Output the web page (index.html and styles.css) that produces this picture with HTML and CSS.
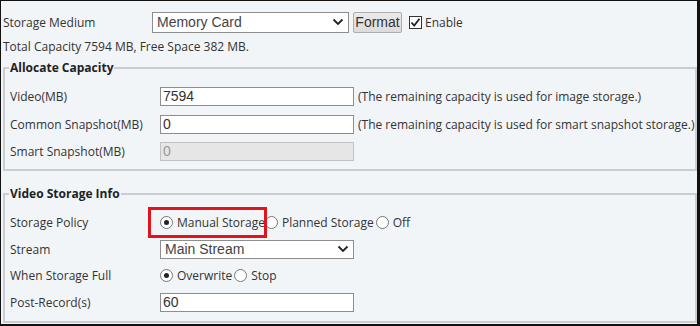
FILE: index.html
```html
<!DOCTYPE html>
<html>
<head>
<meta charset="utf-8">
<link rel="stylesheet" href="styles.css">
</head>
<body>
<div class="frame">
  <div class="toprow">
    <span class="toplabel">Storage Medium</span>
    <div class="select wide">
      <span>Memory Card</span>
      <svg class="chev" width="12" height="8" viewBox="0 0 12 8"><polyline points="1.5,1.5 6,6 10.5,1.5" fill="none" stroke="#222" stroke-width="1.8"/></svg>
    </div>
    <button class="btn">Format</button>
    <span class="check"><svg width="13" height="13" viewBox="0 0 13 13"><rect x="0.5" y="0.5" width="12" height="12" fill="#fff" stroke="#333"/><polyline points="2.5,6.5 5.2,9.5 10.5,2.8" fill="none" stroke="#222" stroke-width="1.8"/></svg></span>
    <span class="enable">Enable</span>
  </div>
  <div class="total">Total Capacity 7594 MB, Free Space 382 MB.</div>

  <fieldset class="fs fs1">
    <legend>Allocate Capacity</legend>
    <div class="row">
      <span class="label">Video(MB)</span>
      <div class="input">7594</div>
      <span class="hint">(The remaining capacity is used for image storage.)</span>
    </div>
    <div class="row">
      <span class="label">Common Snapshot(MB)</span>
      <div class="input">0</div>
      <span class="hint">(The remaining capacity is used for smart snapshot storage.)</span>
    </div>
    <div class="row">
      <span class="label">Smart Snapshot(MB)</span>
      <div class="input disabled">0</div>
    </div>
  </fieldset>

  <fieldset class="fs fs2">
    <legend>Video Storage Info</legend>
    <div class="row r2">
      <span class="label">Storage Policy</span>
      <div class="radios">
        <span class="manual">
          <span class="radio on"></span><span class="rt">Manual Storage</span>
          <span class="redbox"></span>
        </span>
        <span class="radio"></span><span class="rt">Planned Storage</span>
        <span class="radio"></span><span class="rt">Off</span>
      </div>
    </div>
    <div class="row r2">
      <span class="label">Stream</span>
      <div class="select small">
        <span>Main Stream</span>
        <svg class="chev" width="12" height="8" viewBox="0 0 12 8"><polyline points="1.5,1.5 6,6 10.5,1.5" fill="none" stroke="#222" stroke-width="1.8"/></svg>
      </div>
    </div>
    <div class="row r2">
      <span class="label">When Storage Full</span>
      <div class="radios">
        <span class="radio on"></span><span class="rt">Overwrite</span>
        <span class="radio"></span><span class="rt">Stop</span>
      </div>
    </div>
    <div class="row r2">
      <span class="label">Post-Record(s)</span>
      <div class="input">60</div>
    </div>
  </fieldset>
</div>
</body>
</html>
```

FILE: styles.css
```css
* { box-sizing: border-box; }
html, body { margin: 0; padding: 0; }
body {
  font-family: "Open Sans", "Noto Sans", sans-serif;
  font-size: 12px;
  color: #333;
  background: #111;
}
.frame {
  width: 700px;
  height: 326px;
  background: #f2f5f8;
  border-style: solid;
  border-color: #111;
  border-width: 1px 3px 2px 1px;
  overflow: hidden;
}
.toprow {
  display: flex;
  align-items: center;
  height: 22px;
  margin-top: 10px;
  padding-left: 2px;
}
.toplabel { width: 149px; }
.select {
  display: flex;
  align-items: center;
  justify-content: space-between;
  background: #fff;
  border: 1px solid #8e8e8e;
  font-family: "Liberation Sans", Arial, sans-serif;
  font-size: 14px;
  color: #444;
  padding: 0 4px 0 4px;
}
.select.wide { width: 197px; height: 21px; }
.select.small { width: 194px; height: 19px; font-size: 14px; }
.btn {
  margin-left: 4px;
  width: 49px;
  height: 21px;
  padding: 0;
  border: 1px solid #adadad;
  border-radius: 2px;
  background: linear-gradient(#eaeaea, #dcdcdc);
  font-family: "Liberation Sans", Arial, sans-serif;
  font-size: 14px;
  color: #333;
}
.check { margin-left: 7px; display: flex; }
.enable { margin-left: 3px; }
.total { margin-top: 4px; padding-left: 2px; height: 20px; line-height: 20px; }

.fs {
  margin: 0 0 0 2px;
  width: 694px;
  border: 2px solid #c9cdd1;
  padding: 0 0 0 5px;
}
.fs legend {
  font-weight: bold;
  font-size: 12px;
  color: #222;
  padding: 0 1px;
  margin-left: -1px;
  line-height: 16px;
}
.fs1 { margin-top: 3px; height: 111px; padding-top: 7px; }
.fs2 { margin-top: 15px; height: 137px; padding-top: 7px; }
.row {
  display: flex;
  align-items: center;
  height: 27.5px;
}
.row.r2 { height: 26.7px; }
.label { width: 150px; flex: none; }
.input {
  width: 194px;
  height: 19px;
  background: #fff;
  border: 1px solid #8e8e8e;
  font-family: "Liberation Sans", Arial, sans-serif;
  font-size: 14px;
  line-height: 17px;
  color: #333;
  padding-left: 2px;
  flex: none;
}
.input.disabled { background: #e6e6e6; border-color: #c2c2c2; color: #999; }
.hint { margin-left: 4px; white-space: nowrap; }
.radios { display: flex; align-items: center; }
.manual { position: relative; display: flex; align-items: center; }
.radio {
  width: 13px;
  height: 13px;
  border: 1px solid #777;
  border-radius: 50%;
  background: #fff;
  margin: 0 4px 0 0;
  display: inline-flex;
  align-items: center;
  justify-content: center;
  flex: none;
}
.rt + .radio { margin-left: 2px; }
.radio.on::after {
  content: "";
  width: 5px;
  height: 5px;
  border-radius: 50%;
  background: #222;
}
.redbox {
  position: absolute;
  left: -12px;
  top: -7px;
  width: 119px;
  height: 31px;
  border: 3px solid #e0141c;
}
```
